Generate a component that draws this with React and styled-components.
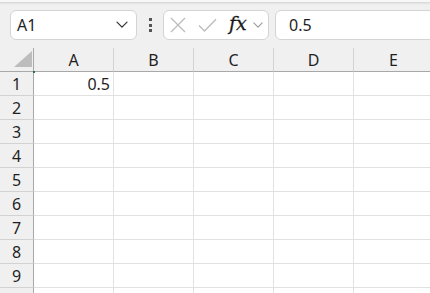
import React from 'react';
import styled, { createGlobalStyle } from 'styled-components';

const GlobalStyle = createGlobalStyle`
  html, body {
    margin: 0;
    padding: 0;
    background: #f0f0f0;
    overflow: hidden;
  }
  body {
    font-family: "Noto Sans", "Open Sans", sans-serif;
    color: #1f1f1f;
  }
`;

const columns = ['A', 'B', 'C', 'D', 'E'];
const rows = [1, 2, 3, 4, 5, 6, 7, 8, 9];
const values = { A1: '0.5' };

const Chevron = ({ size = 12, color = '#444' }) => (
  <svg width={size} height={size * 0.6} viewBox="0 0 12 7" fill="none">
    <path d="M1 1l5 5 5-5" stroke={color} strokeWidth="1.3" strokeLinecap="round" strokeLinejoin="round" />
  </svg>
);

const App = () => {
  return (
    <Page>
      <GlobalStyle />
      <TopEdge />
      <Toolbar>
        <NameBox>
          <NameText>A1</NameText>
          <Chevron size={12} color="#333" />
        </NameBox>
        <Grip>
          <span /><span /><span />
        </Grip>
        <ButtonGroup>
          <IconButton>
            <svg width="16" height="16" viewBox="0 0 16 16" fill="none">
              <path d="M1 1l14 14M15 1L1 15" stroke="#bcbcbc" strokeWidth="1.3" />
            </svg>
          </IconButton>
          <IconButton>
            <svg width="19" height="14" viewBox="0 0 19 14" fill="none">
              <path d="M1 7.5l5.5 5.5L18 1.2" stroke="#bcbcbc" strokeWidth="1.3" />
            </svg>
          </IconButton>
          <Fx>fx</Fx>
          <Chevron size={10} color="#9a9a9a" />
        </ButtonGroup>
        <FormulaInput>0.5</FormulaInput>
      </Toolbar>
      <Sheet>
        <Corner>
          <svg width="18" height="16" viewBox="0 0 18 16">
            <path d="M18 0L18 16L0 16Z" fill="#bdbdbd" />
          </svg>
          <CornerDot />
        </Corner>
        {columns.map((c) => (
          <ColHeader key={c}>{c}</ColHeader>
        ))}
        {rows.map((r) => (
          <React.Fragment key={r}>
            <RowHeader>{r}</RowHeader>
            {columns.map((c) => (
              <Cell key={c + r}>{values[c + r]}</Cell>
            ))}
          </React.Fragment>
        ))}
        <RowHeader />
        {columns.map((c) => (
          <Cell key={c + 'next'} />
        ))}
      </Sheet>
    </Page>
  );
};

const Page = styled.div`
  width: 430px;
  height: 293px;
  overflow: hidden;
  background: #f0f0f0;
`;

const TopEdge = styled.div`
  height: 2px;
  background: #f7f7f7;
  border-bottom: 1px solid #d9d9d9;
  box-shadow: 0 1px 2px rgba(0, 0, 0, 0.06);
`;

const Toolbar = styled.div`
  display: flex;
  align-items: center;
  height: 30px;
  padding: 7px 0 8px 10px;
`;

const NameBox = styled.div`
  box-sizing: border-box;
  width: 127px;
  height: 30px;
  background: #fff;
  border: 1px solid #d4d4d4;
  border-radius: 6px;
  display: flex;
  align-items: center;
  justify-content: space-between;
  padding: 0 8px 0 6px;
`;

const NameText = styled.span`
  font-size: 16px;
`;

const Grip = styled.div`
  width: 26px;
  height: 14px;
  display: flex;
  flex-direction: column;
  align-items: center;
  justify-content: space-between;
  span {
    width: 3px;
    height: 3px;
    background: #555;
  }
`;

const ButtonGroup = styled.div`
  box-sizing: border-box;
  width: 106px;
  height: 30px;
  background: #fff;
  border: 1px solid #d4d4d4;
  border-radius: 6px;
  display: flex;
  align-items: center;
  gap: 12px;
  padding: 0 0 0 6px;
`;

const IconButton = styled.div`
  display: flex;
  align-items: center;
  justify-content: center;
`;

const Fx = styled.span`
  font-family: "DejaVu Serif", "Liberation Serif", serif;
  font-style: italic;
  font-size: 19px;
  color: #1a1a1a;
  margin-right: -6px;
  line-height: 1;
  position: relative;
  top: -2px;
  -webkit-text-stroke: 0.3px #1a1a1a;
`;

const FormulaInput = styled.div`
  box-sizing: border-box;
  height: 30px;
  margin-left: 6px;
  flex: 1;
  margin-right: -10px;
  background: #fff;
  border: 1px solid #d4d4d4;
  border-radius: 6px;
  display: flex;
  align-items: center;
  padding-left: 13px;
  font-size: 16px;
`;

const Sheet = styled.div`
  display: grid;
  grid-template-columns: 34px repeat(5, 80px);
  grid-template-rows: 24px;
  grid-auto-rows: 24px;
  background: #fff;
`;

const Corner = styled.div`
  position: relative;
  background: #f0f0f0;
  border-right: 1px solid #a8a8a8;
  border-bottom: 1px solid #a8a8a8;
  display: flex;
  align-items: flex-end;
  justify-content: flex-end;
  padding: 0 1px 4px 0;
  box-sizing: border-box;
`;

const CornerDot = styled.div`
  position: absolute;
  right: -2px;
  bottom: -2px;
  width: 2px;
  height: 2px;
  background: #217346;
`;

const ColHeader = styled.div`
  box-sizing: border-box;
  background: #f0f0f0;
  border-right: 1px solid #d2d2d2;
  border-bottom: 1px solid #a8a8a8;
  display: flex;
  align-items: center;
  justify-content: center;
  font-size: 16px;
`;

const RowHeader = styled.div`
  box-sizing: border-box;
  background: #f0f0f0;
  border-right: 1px solid #a8a8a8;
  border-bottom: 1px solid #d2d2d2;
  display: flex;
  align-items: center;
  justify-content: center;
  font-size: 16px;
`;

const Cell = styled.div`
  box-sizing: border-box;
  border-right: 1px solid #e1e1e1;
  border-bottom: 1px solid #e1e1e1;
  display: flex;
  align-items: center;
  justify-content: flex-end;
  padding-right: 3px;
  font-size: 16px;
`;

export default App;
